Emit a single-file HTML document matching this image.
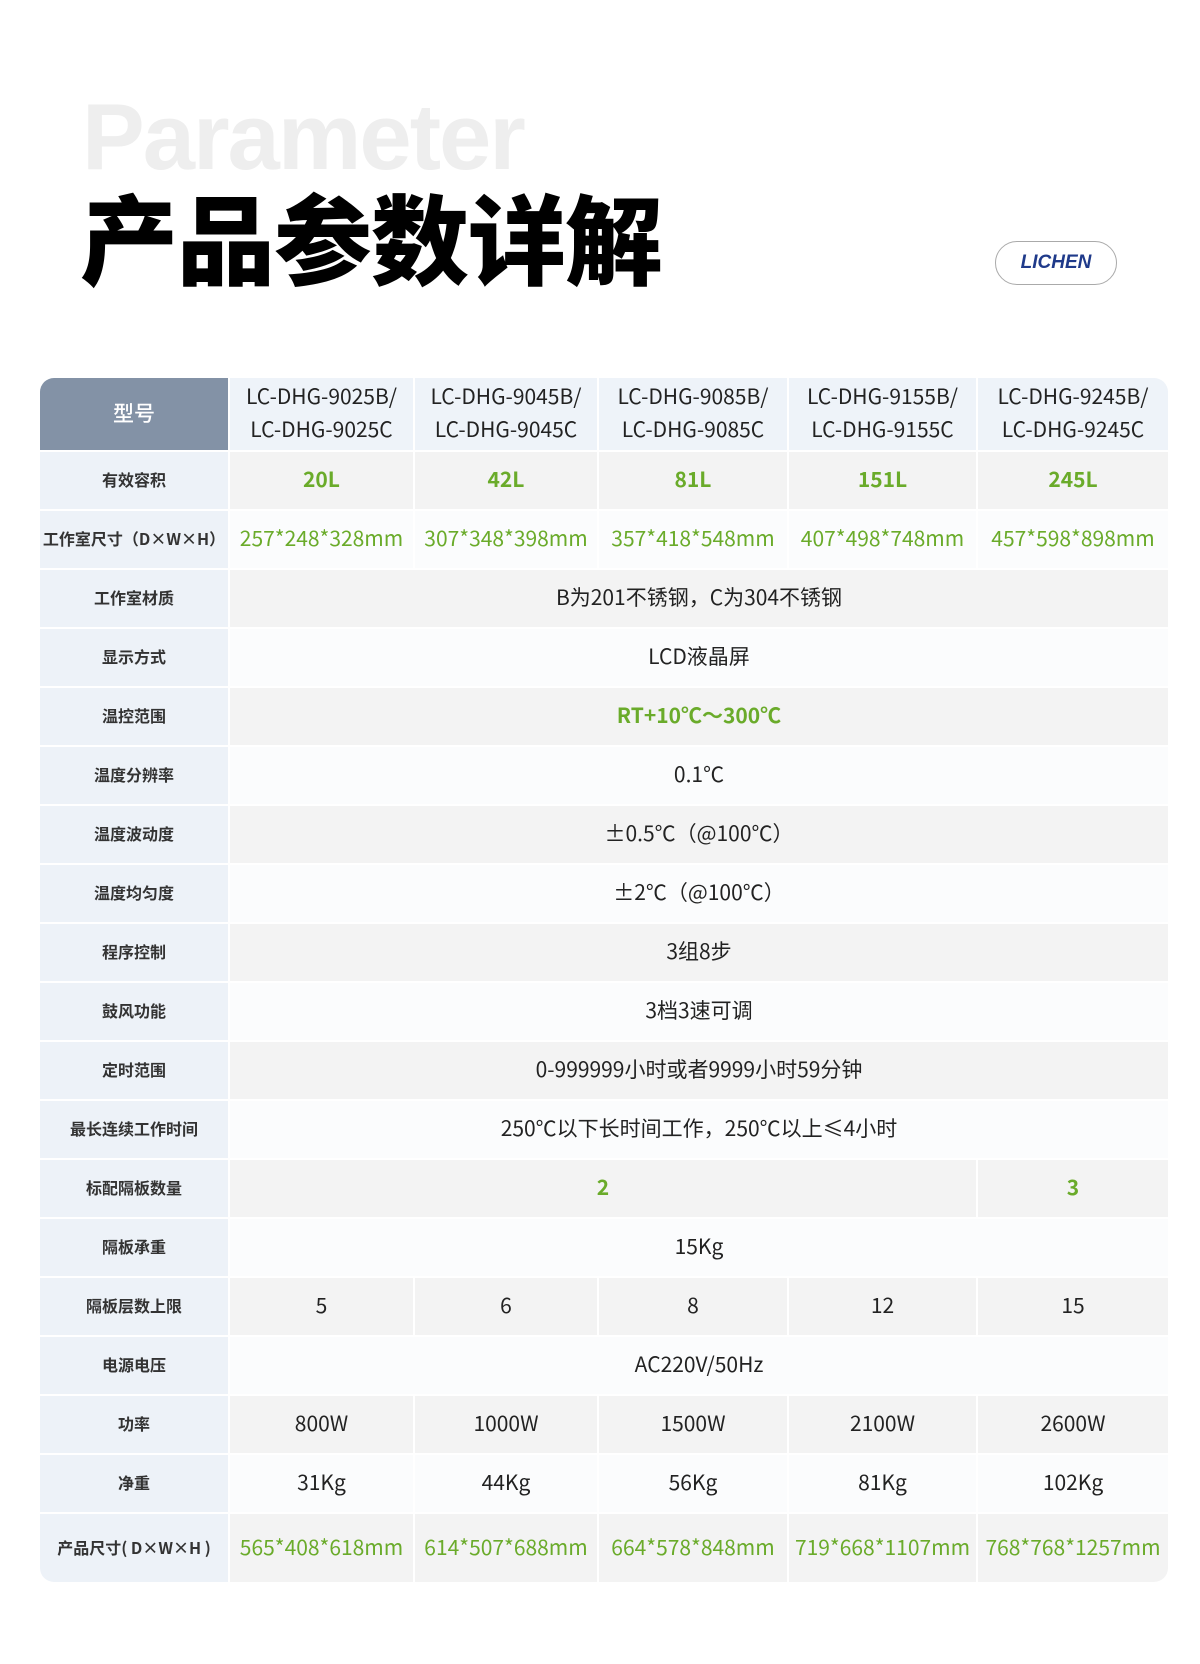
<!DOCTYPE html>
<html><head><meta charset="utf-8"><style>
*{margin:0;padding:0;box-sizing:border-box}
body{width:1200px;height:1664px;background:#fff;position:relative;overflow:hidden;font-family:"Noto Sans CJK SC","Liberation Sans",sans-serif}
.en{position:absolute;left:82px;top:90px;font-size:94px;font-weight:bold;color:#eeeeee;letter-spacing:-2px;line-height:1;font-family:"Liberation Sans",sans-serif}
.cn{position:absolute;left:80px;top:186px;font-size:98px;font-weight:900;color:#000;line-height:1;font-family:"Noto Sans CJK SC",sans-serif;letter-spacing:-1px}
.logo{position:absolute;left:995px;top:241px;width:122px;height:44px;border:1px solid #aaa;border-radius:22px;display:flex;align-items:center;justify-content:center;color:#1f3a8a;font-weight:900;font-style:italic;font-size:19px;font-family:"Liberation Sans",sans-serif}
.t{position:absolute;left:40px;top:378px;display:grid;grid-template-columns:188px 183px 182px 188px 187px 190px;grid-template-rows:72px repeat(18,57px) 68px;gap:2px;background:#fff;border-radius:14px;overflow:hidden}
.t div{display:flex;align-items:center;justify-content:center;text-align:center;font-size:21px;color:#222;background:#f3f3f3;white-space:nowrap;padding-bottom:3px}
.t .l{background:#edf2f8;font-size:16px;font-weight:bold;color:#333}
.t .h{background:#eef3f9;line-height:33px;font-size:21px}
.t .hl{background:#8392a6;color:#fff;font-size:21px;font-weight:500}
.t .w{background:#fbfcfd}
.g{color:#6aab2a!important}
.b{font-weight:bold}
.s5{grid-column:span 5}
.s4{grid-column:span 4}
</style></head><body>
<div class="en">Parameter</div>
<div class="cn">产品参数详解</div>
<div class="logo">LICHEN</div>
<div class="t">
<div class="hl">型号</div>
<div class="h">LC-DHG-9025B/<br>LC-DHG-9025C</div>
<div class="h">LC-DHG-9045B/<br>LC-DHG-9045C</div>
<div class="h">LC-DHG-9085B/<br>LC-DHG-9085C</div>
<div class="h">LC-DHG-9155B/<br>LC-DHG-9155C</div>
<div class="h">LC-DHG-9245B/<br>LC-DHG-9245C</div>

<div class="l">有效容积</div><div class="g b">20L</div><div class="g b">42L</div><div class="g b">81L</div><div class="g b">151L</div><div class="g b">245L</div>
<div class="l">工作室尺寸（D×W×H）</div><div class="w g">257*248*328mm</div><div class="w g">307*348*398mm</div><div class="w g">357*418*548mm</div><div class="w g">407*498*748mm</div><div class="w g">457*598*898mm</div>
<div class="l">工作室材质</div><div class="s5">B为201不锈钢，C为304不锈钢</div>
<div class="l">显示方式</div><div class="s5 w">LCD液晶屏</div>
<div class="l">温控范围</div><div class="s5 g b">RT+10℃～300℃</div>
<div class="l">温度分辨率</div><div class="s5 w">0.1℃</div>
<div class="l">温度波动度</div><div class="s5">±0.5℃（@100℃）</div>
<div class="l">温度均匀度</div><div class="s5 w">±2℃（@100℃）</div>
<div class="l">程序控制</div><div class="s5">3组8步</div>
<div class="l">鼓风功能</div><div class="s5 w">3档3速可调</div>
<div class="l">定时范围</div><div class="s5">0-999999小时或者9999小时59分钟</div>
<div class="l">最长连续工作时间</div><div class="s5 w">250℃以下长时间工作，250℃以上≤4小时</div>
<div class="l">标配隔板数量</div><div class="s4 g b">2</div><div class="g b">3</div>
<div class="l">隔板承重</div><div class="s5 w">15Kg</div>
<div class="l">隔板层数上限</div><div>5</div><div>6</div><div>8</div><div>12</div><div>15</div>
<div class="l">电源电压</div><div class="s5 w">AC220V/50Hz</div>
<div class="l">功率</div><div>800W</div><div>1000W</div><div>1500W</div><div>2100W</div><div>2600W</div>
<div class="l">净重</div><div class="w">31Kg</div><div class="w">44Kg</div><div class="w">56Kg</div><div class="w">81Kg</div><div class="w">102Kg</div>
<div class="l">产品尺寸( D×W×H )</div><div class="g">565*408*618mm</div><div class="g">614*507*688mm</div><div class="g">664*578*848mm</div><div class="g">719*668*1107mm</div><div class="g">768*768*1257mm</div>
</div>
</body></html>
